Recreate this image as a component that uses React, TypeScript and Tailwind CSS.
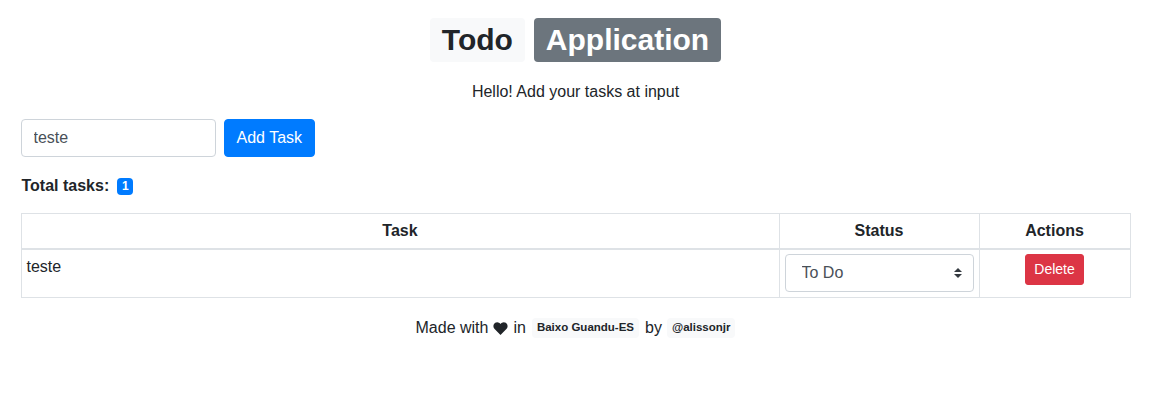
import React, { useState } from 'react';

const App: React.FC = () => {
  const [task, setTask] = useState('teste');
  const [tasks, setTasks] = useState<{ name: string; status: string }[]>([{ name: 'teste', status: 'To Do' }]);

  const addTask = () => {
    if (!task.trim()) return;
    setTasks([...tasks, { name: task, status: 'To Do' }]);
  };

  const removeTask = (i: number) => setTasks(tasks.filter((_, idx) => idx !== i));

  return (
    <div className="min-h-screen bg-white text-[#212529] text-[16px] leading-[24px] font-['Liberation_Sans',Arial,sans-serif]">
      <div className="w-[1110px] mx-auto pt-[18px]">
        {/* Title */}
        <h1 className="flex justify-center gap-[9px] text-[30px] leading-none font-bold">
          <span className="bg-[#f8f9fa] text-[#212529] rounded-[4px] px-[12px] h-[44px] flex items-center">Todo</span>
          <span className="bg-[#6c757d] text-white rounded-[4px] px-[12px] h-[44px] flex items-center">Application</span>
        </h1>
        <p className="mt-[18px] text-center">Hello! Add your tasks at input</p>

        {/* Input */}
        <div className="mt-[15px] flex gap-[8px]">
          <input
            value={task}
            onChange={(e) => setTask(e.target.value)}
            className="w-[195px] h-[38px] border border-[#ced4da] rounded-[4px] px-[12px] text-[#495057] outline-none"
          />
          <button onClick={addTask} className="h-[38px] px-[12px] bg-[#007bff] text-white rounded-[4px] border border-[#007bff]">
            Add Task
          </button>
        </div>

        <div className="mt-[17px] flex items-center gap-[8px] font-bold pl-[1px]">
          <span>Total tasks:</span>
          <span className="bg-[#007bff] text-white text-[12px] leading-none rounded-[4px] w-[16px] h-[17px] flex items-center justify-center">
            {tasks.length}
          </span>
        </div>

        {/* Table */}
        <table className="mt-[15px] w-full border-collapse border border-[#dee2e6]">
          <thead>
            <tr>
              <th className="border border-[#dee2e6] border-b-2 py-[5px] text-center font-bold">Task</th>
              <th className="w-[200px] border border-[#dee2e6] border-b-2 py-[5px] text-center font-bold">Status</th>
              <th className="w-[151px] border border-[#dee2e6] border-b-2 py-[5px] text-center font-bold">Actions</th>
            </tr>
          </thead>
          <tbody>
            {tasks.map((t, i) => (
              <tr key={i}>
                <td className="border border-[#dee2e6] align-top px-[5px] pt-[5px]">{t.name}</td>
                <td className="border border-[#dee2e6] align-top px-[5px] pt-[4px] pb-[5px]">
                  <div className="relative">
                    <select
                      defaultValue={t.status}
                      className="appearance-none w-full h-[38px] border border-[#ced4da] rounded-[4px] pl-[16px] pr-[28px] text-[#495057] bg-white outline-none"
                    >
                      <option>To Do</option>
                      <option>Doing</option>
                      <option>Done</option>
                    </select>
                    <svg className="absolute right-[12px] top-[14px] pointer-events-none" width="8" height="10" viewBox="0 0 8 10">
                      <path d="M4 0 L8 4 H0 Z M4 10 L0 6 H8 Z" fill="#343a40" />
                    </svg>
                  </div>
                </td>
                <td className="border border-[#dee2e6] align-top text-center pt-[4px]">
                  <button
                    onClick={() => removeTask(i)}
                    className="bg-[#dc3545] text-white text-[14px] leading-[21px] rounded-[3px] px-[8px] py-[4px] border border-[#dc3545]"
                  >
                    Delete
                  </button>
                </td>
              </tr>
            ))}
          </tbody>
        </table>

        {/* Footer */}
        <p className="mt-[18px] flex justify-center items-center">
          <span>Made with</span>
          <svg className="mx-[5px]" width="15" height="13" viewBox="0 0 24 21">
            <path d="M12 21 L2.5 11.5 C-0.5 8.5 0 3.5 3.5 1.2 C6.5 -0.8 10 0.5 12 3.2 C14 0.5 17.5 -0.8 20.5 1.2 C24 3.5 24.5 8.5 21.5 11.5 Z" fill="#212529" />
          </svg>
          <span>in</span>
          <span className="ml-[6px] bg-[#f8f9fa] text-[11.5px] leading-none font-bold px-[5px] py-[4px] rounded-[4px]">Baixo Guandu-ES</span>
          <span className="ml-[6px]">by</span>
          <span className="ml-[5px] bg-[#f8f9fa] text-[11.5px] leading-none font-bold px-[5px] py-[4px] rounded-[4px]">@alissonjr</span>
        </p>
      </div>
    </div>
  );
};

export default App;
